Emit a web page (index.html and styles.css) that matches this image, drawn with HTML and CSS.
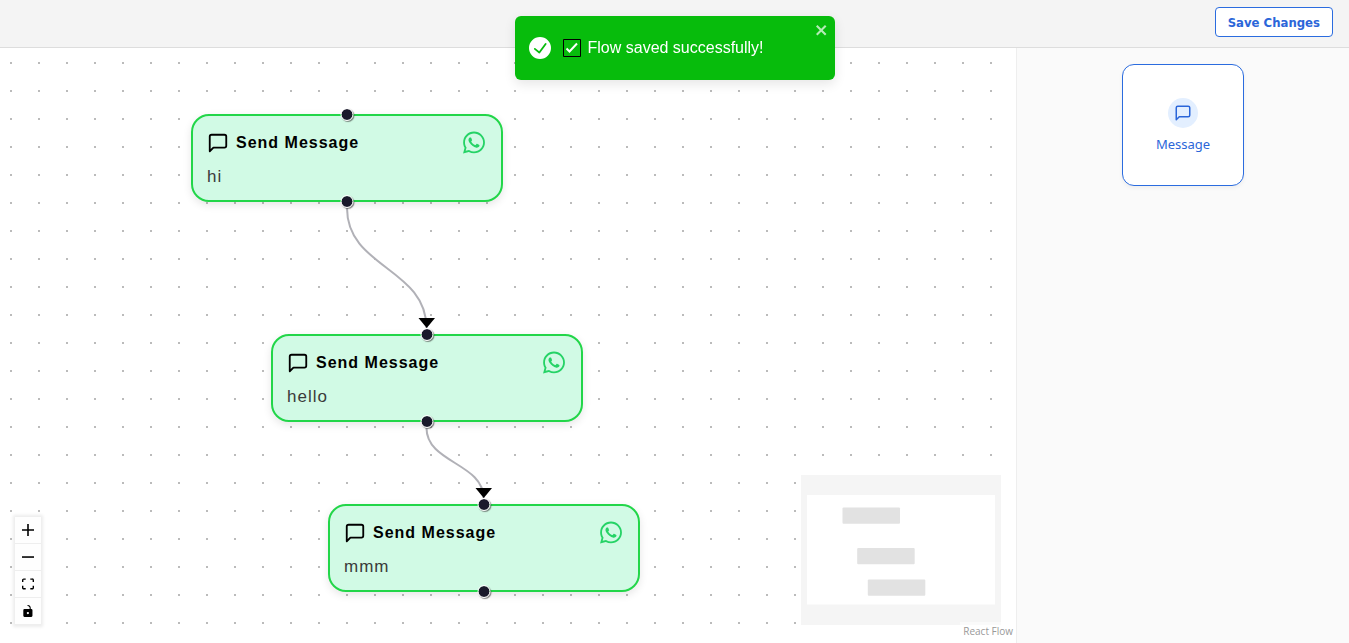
FILE: index.html
```html
<!DOCTYPE html>
<html lang="en">
<head>
<meta charset="utf-8">
<title>Flow builder</title>
<link rel="stylesheet" href="styles.css">
</head>
<body>
<svg class="defs" aria-hidden="true">
  <symbol id="message" viewBox="0 0 24 24"><path d="M21 15a2 2 0 0 1-2 2H7l-4 4V5a2 2 0 0 1 2-2h14a2 2 0 0 1 2 2z" fill="none" stroke="currentColor" stroke-width="2" stroke-linecap="round" stroke-linejoin="round"/></symbol>
  <symbol id="whatsapp" viewBox="0 0 448 512"><path fill="currentColor" d="M380.9 97.1C339 55.1 283.2 32 223.9 32c-122.4 0-222 99.6-222 222 0 39.1 10.2 77.3 29.6 111L0 480l117.7-30.9c32.4 17.7 68.9 27 106.1 27h.1c122.3 0 224.1-99.6 224.1-222 0-59.3-25.2-115-67.1-157zm-157 341.6c-33.200 0-65.700-8.900-94-25.700l-6.700-4-69.800 18.300L72 359.200l-4.400-7c-18.500-29.400-28.200-63.300-28.200-98.200 0-101.700 82.800-184.500 184.600-184.500 49.300 0 95.600 19.200 130.400 54.100 34.800 34.900 56.200 81.200 56.100 130.500 0 101.800-84.900 184.600-186.600 184.600zm101.200-138.200c-5.500-2.800-32.800-16.200-37.900-18-5.100-1.900-8.800-2.800-12.500 2.800-3.700 5.600-14.300 18-17.600 21.800-3.200 3.700-6.500 4.200-12 1.400-32.600-16.300-54-29.100-75.500-66-5.700-9.800 5.700-9.100 16.300-30.300 1.800-3.700.9-6.900-.5-9.700-1.400-2.800-12.500-30.100-17.100-41.200-4.500-10.800-9.100-9.300-12.500-9.500-3.200-.2-6.900-.2-10.600-.2-3.700 0-9.700 1.400-14.800 6.900-5.100 5.600-19.400 19-19.400 46.300 0 27.300 19.900 53.700 22.600 57.400 2.800 3.700 39.100 59.700 94.800 83.800 35.200 15.200 49 16.500 66.600 13.900 10.700-1.600 32.800-13.400 37.400-26.400 4.600-13 4.600-24.100 3.200-26.400-1.300-2.500-5-3.900-10.500-6.600z"/></symbol>
</svg>
<header class="topbar"><button class="save" type="button">Save Changes</button></header>
<div class="workspace">
  <main class="canvas">
    <svg class="edges" aria-hidden="true">
      <path class="edge" d="M347 160C347 220 426.500 220 426.500 280"/>
      <path class="edge" d="M426.500 380C426.500 415 483.500 415 483.500 450"/>
      <path d="M418.500 270h16.500l-8.250 10z"/>
      <path d="M475.500 440h16.500l-8.250 10z"/>
    </svg>
    <article class="node node-first">
      <span class="handle handle-top"></span>
      <div class="node-head"><svg class="node-icon"><use href="#message"/></svg><strong>Send Message</strong><svg class="wa-icon"><use href="#whatsapp"/></svg></div>
      <div class="node-body">hi</div>
      <span class="handle handle-bottom"></span>
    </article>
    <article class="node node-second">
      <span class="handle handle-top"></span>
      <div class="node-head"><svg class="node-icon"><use href="#message"/></svg><strong>Send Message</strong><svg class="wa-icon"><use href="#whatsapp"/></svg></div>
      <div class="node-body">hello</div>
      <span class="handle handle-bottom"></span>
    </article>
    <article class="node node-third">
      <span class="handle handle-top"></span>
      <div class="node-head"><svg class="node-icon"><use href="#message"/></svg><strong>Send Message</strong><svg class="wa-icon"><use href="#whatsapp"/></svg></div>
      <div class="node-body">mmm</div>
      <span class="handle handle-bottom"></span>
    </article>
    <div class="controls">
      <button type="button" aria-label="Zoom in"><svg viewBox="0 0 32 32"><path d="M32 18.133H18.133V32h-4.266V18.133H0v-4.266h13.867V0h4.266v13.867H32z"/></svg></button>
      <button type="button" aria-label="Zoom out"><svg viewBox="0 0 32 32"><path d="M0 14h32v4.200H0z"/></svg></button>
      <button type="button" aria-label="Fit view"><svg viewBox="0 0 32 30"><path d="M3.692 4.630c0-.530.400-.938.939-.938h5.215V0H4.708C2.130 0 0 2.054 0 4.630v5.216h3.692V4.631zM27.354 0h-5.200v3.692h5.170c.530 0 .984.400.984.939v5.215H32V4.631A4.624 4.624 0 0 0 27.354 0zm.954 24.830c0 .532-.400.940-.939.940h-5.215v3.768h5.215c2.577 0 4.631-2.130 4.631-4.707v-5.139h-3.692v5.139zm-23.677.940a.919.919 0 0 1-.939-.940v-5.138H0v5.139c0 2.577 2.130 4.707 4.708 4.707h5.138V25.770H4.631z"/></svg></button>
      <button type="button" aria-label="Toggle interactivity"><svg viewBox="0 0 25 32"><path d="M21.333 10.667H19.810V7.619C19.810 3.429 16.380 0 12.190 0c-4.114 1.828-1.370 2.133.305 2.438 1.676.305 4.420 2.590 4.420 5.181v3.048H3.047A3.056 3.056 0 0 0 0 13.714v15.238A3.056 3.056 0 0 0 3.048 32h18.285a3.056 3.056 0 0 0 3.048-3.048V13.714a3.056 3.056 0 0 0-3.048-3.047zM12.190 24.533a3.056 3.056 0 0 1-3.047-3.047 3.056 3.056 0 0 1 3.048-3.048 3.056 3.056 0 0 1 3.048 3.048 3.056 3.056 0 0 1-3.048 3.047z"/></svg></button>
    </div>
    <svg class="minimap" viewBox="0 0 200 150" role="img" aria-label="Mini map">
      <rect width="200" height="150" fill="#f5f5f5"/>
      <rect x="6" y="20" width="188" height="109.500" fill="#fff"/>
      <g fill="#e2e2e2"><rect x="41.500" y="32.500" width="57.500" height="16.300" rx="1"/><rect x="56.200" y="73" width="57.500" height="16.300" rx="1"/><rect x="66.800" y="104.500" width="57.500" height="16.300" rx="1"/></g>
    </svg>
    <a class="attribution" href="#">React Flow</a>
  </main>
  <aside class="sidebar">
    <button class="card" type="button"><span class="badge"><svg><use href="#message"/></svg></span>Message</button>
  </aside>
</div>
<div class="toast" role="alert">
  <svg class="toast-icon" viewBox="0 0 24 24"><path fill="#fff" d="M12 0a12 12 0 1 0 12 12A12.014 12.014 0 0 0 12 0zm6.927 8.200l-6.845 9.289a1.011 1.011 0 0 1-1.430.188l-4.888-3.908a1 1 0 1 1 1.250-1.562l4.076 3.261 6.227-8.451a1 1 0 1 1 1.610 1.183z"/></svg>
  <svg class="tick" viewBox="0 0 18 18" role="img" aria-label="Done"><path d="M.5.500h17v17H.500z" fill="none" stroke="#000"/><path d="M3.500 9.500l3 3L14 4.500" fill="none" stroke="#fff" stroke-width="2"/></svg>
  <span>Flow saved successfully!</span>
  <button class="close" type="button" aria-label="Close"><svg viewBox="0 0 14 16"><path fill-rule="evenodd" d="M7.710 8.230l3.750 3.750-1.480 1.480-3.750-3.750-3.750 3.750L1 11.980l3.750-3.750L1 4.480 2.480 3l3.750 3.750L9.980 3l1.480 1.480-3.750 3.750z"/></svg></button>
</div>
</body>
</html>
```
FILE: styles.css
```css
* { box-sizing: border-box; }
body {
  margin: 0;
  min-height: 100vh;
  display: flex;
  flex-direction: column;
  font-family: "Noto Sans", sans-serif;
}
svg { display: block; flex: none; }
button { font-family: inherit; cursor: pointer; }
.defs { position: absolute; width: 0; height: 0; }

.topbar {
  display: flex;
  justify-content: flex-end;
  padding: 7px 16px 10px;
  background: #f4f4f4;
  border-bottom: 1px solid #ddd;
}
.save {
  height: 30px;
  padding: 0 12px;
  border: 1px solid #2b6cdf;
  border-radius: 4px;
  background: #fff;
  color: #2b66d9;
  font-family: "DejaVu Sans Condensed", "DejaVu Sans", sans-serif;
  font-size: 13px;
  font-weight: 700;
}

.workspace { flex: 1; display: flex; }
.canvas {
  position: relative;
  flex: 1;
  overflow: hidden;
  background: #fff radial-gradient(circle at 11px 15px, #bbb 0, #bbb 1px, transparent 1px) 0 0 / 28px 28px;
}
.sidebar {
  width: 333px;
  padding: 16px;
  display: flex;
  justify-content: center;
  align-items: flex-start;
  border-left: 1px solid #eee;
  background: #fafafa;
}
.card {
  width: 122px;
  height: 122px;
  display: flex;
  flex-direction: column;
  align-items: center;
  justify-content: center;
  gap: 7px;
  border: 1px solid #2b6cdf;
  border-radius: 12px;
  background: #fff;
  box-shadow: 0 2px 4px rgba(0, 0, 0, .05);
  color: #2b66d9;
  font-size: 13px;
}
.badge {
  display: grid;
  place-items: center;
  width: 30px;
  height: 30px;
  border-radius: 50%;
  background: #e3efff;
}
.badge svg { width: 18px; height: 18px; }

.edges { position: absolute; inset: 0; width: 100%; height: 100%; }
.edge { fill: none; stroke: #b1b1b7; stroke-width: 2; }

.node {
  position: absolute;
  width: 312px;
  padding: 14px 15px 13px 14px;
  border: 2px solid #22d649;
  border-radius: 18px;
  background: #d1fae5;
  box-shadow: 0 3px 8px rgba(0, 0, 0, .1);
  font-family: "Liberation Sans", Arial, sans-serif;
  font-size: 17px;
  letter-spacing: 1px;
}
.node-first { left: 191px; top: 66px; }
.node-second { left: 271px; top: 286px; }
.node-third { left: 328px; top: 456px; }
.node-head { display: flex; align-items: center; gap: 7px; height: 25px; }
.node-head strong { flex: 1; font-size: 16px; }
.node-icon { width: 22px; height: 22px; }
.wa-icon { width: 24px; height: 25px; color: #25d366; }
.node-body { margin-top: 12px; line-height: 20px; color: #3a3a3a; }
.handle {
  position: absolute;
  left: 50%;
  width: 13px;
  height: 13px;
  border: 1px solid #fff;
  border-radius: 50%;
  background: #1a192b;
  background-clip: padding-box;
  box-shadow: 1px 1px 1px rgba(60, 60, 60, .6);
  transform: translateX(-50%);
}
.handle-top { top: -8px; }
.handle-bottom { bottom: -8px; }

.controls {
  position: absolute;
  left: 15px;
  bottom: 18px;
  width: 26px;
  box-shadow: 0 0 3px 2px rgba(0, 0, 0, .08);
}
.controls button {
  display: grid;
  place-items: center;
  width: 100%;
  height: 27px;
  padding: 0;
  border: 0;
  border-bottom: 1px solid #eee;
  background: #fefefe;
}
.controls svg { width: 12px; height: 12px; }
.minimap { position: absolute; right: 15px; bottom: 18px; width: 200px; height: 150px; }
.attribution {
  position: absolute;
  right: 0;
  bottom: 3px;
  padding: 2px 3px;
  background: rgba(255, 255, 255, .5);
  color: #999;
  font-family: "Open Sans", sans-serif;
  font-size: 10px;
  line-height: 14px;
  text-decoration: none;
}

.toast {
  position: fixed;
  top: 16px;
  left: 50%;
  width: 320px;
  height: 64px;
  padding: 0 14px;
  display: flex;
  align-items: center;
  transform: translateX(-50%);
  border-radius: 6px;
  background: #07bc0c;
  box-shadow: 0 4px 12px rgba(0, 0, 0, .1);
  color: #fff;
  font-family: "Liberation Sans", Arial, sans-serif;
  font-size: 16px;
}
.toast-icon { width: 22px; height: 22px; margin-right: 12px; }
.tick { width: 18px; height: 18px; margin-right: 7px; }
.close {
  position: absolute;
  top: 6px;
  right: 6px;
  padding: 0;
  border: 0;
  background: none;
  color: #fff;
  opacity: .7;
}
.close svg { width: 14px; height: 16px; fill: currentColor; }
```
